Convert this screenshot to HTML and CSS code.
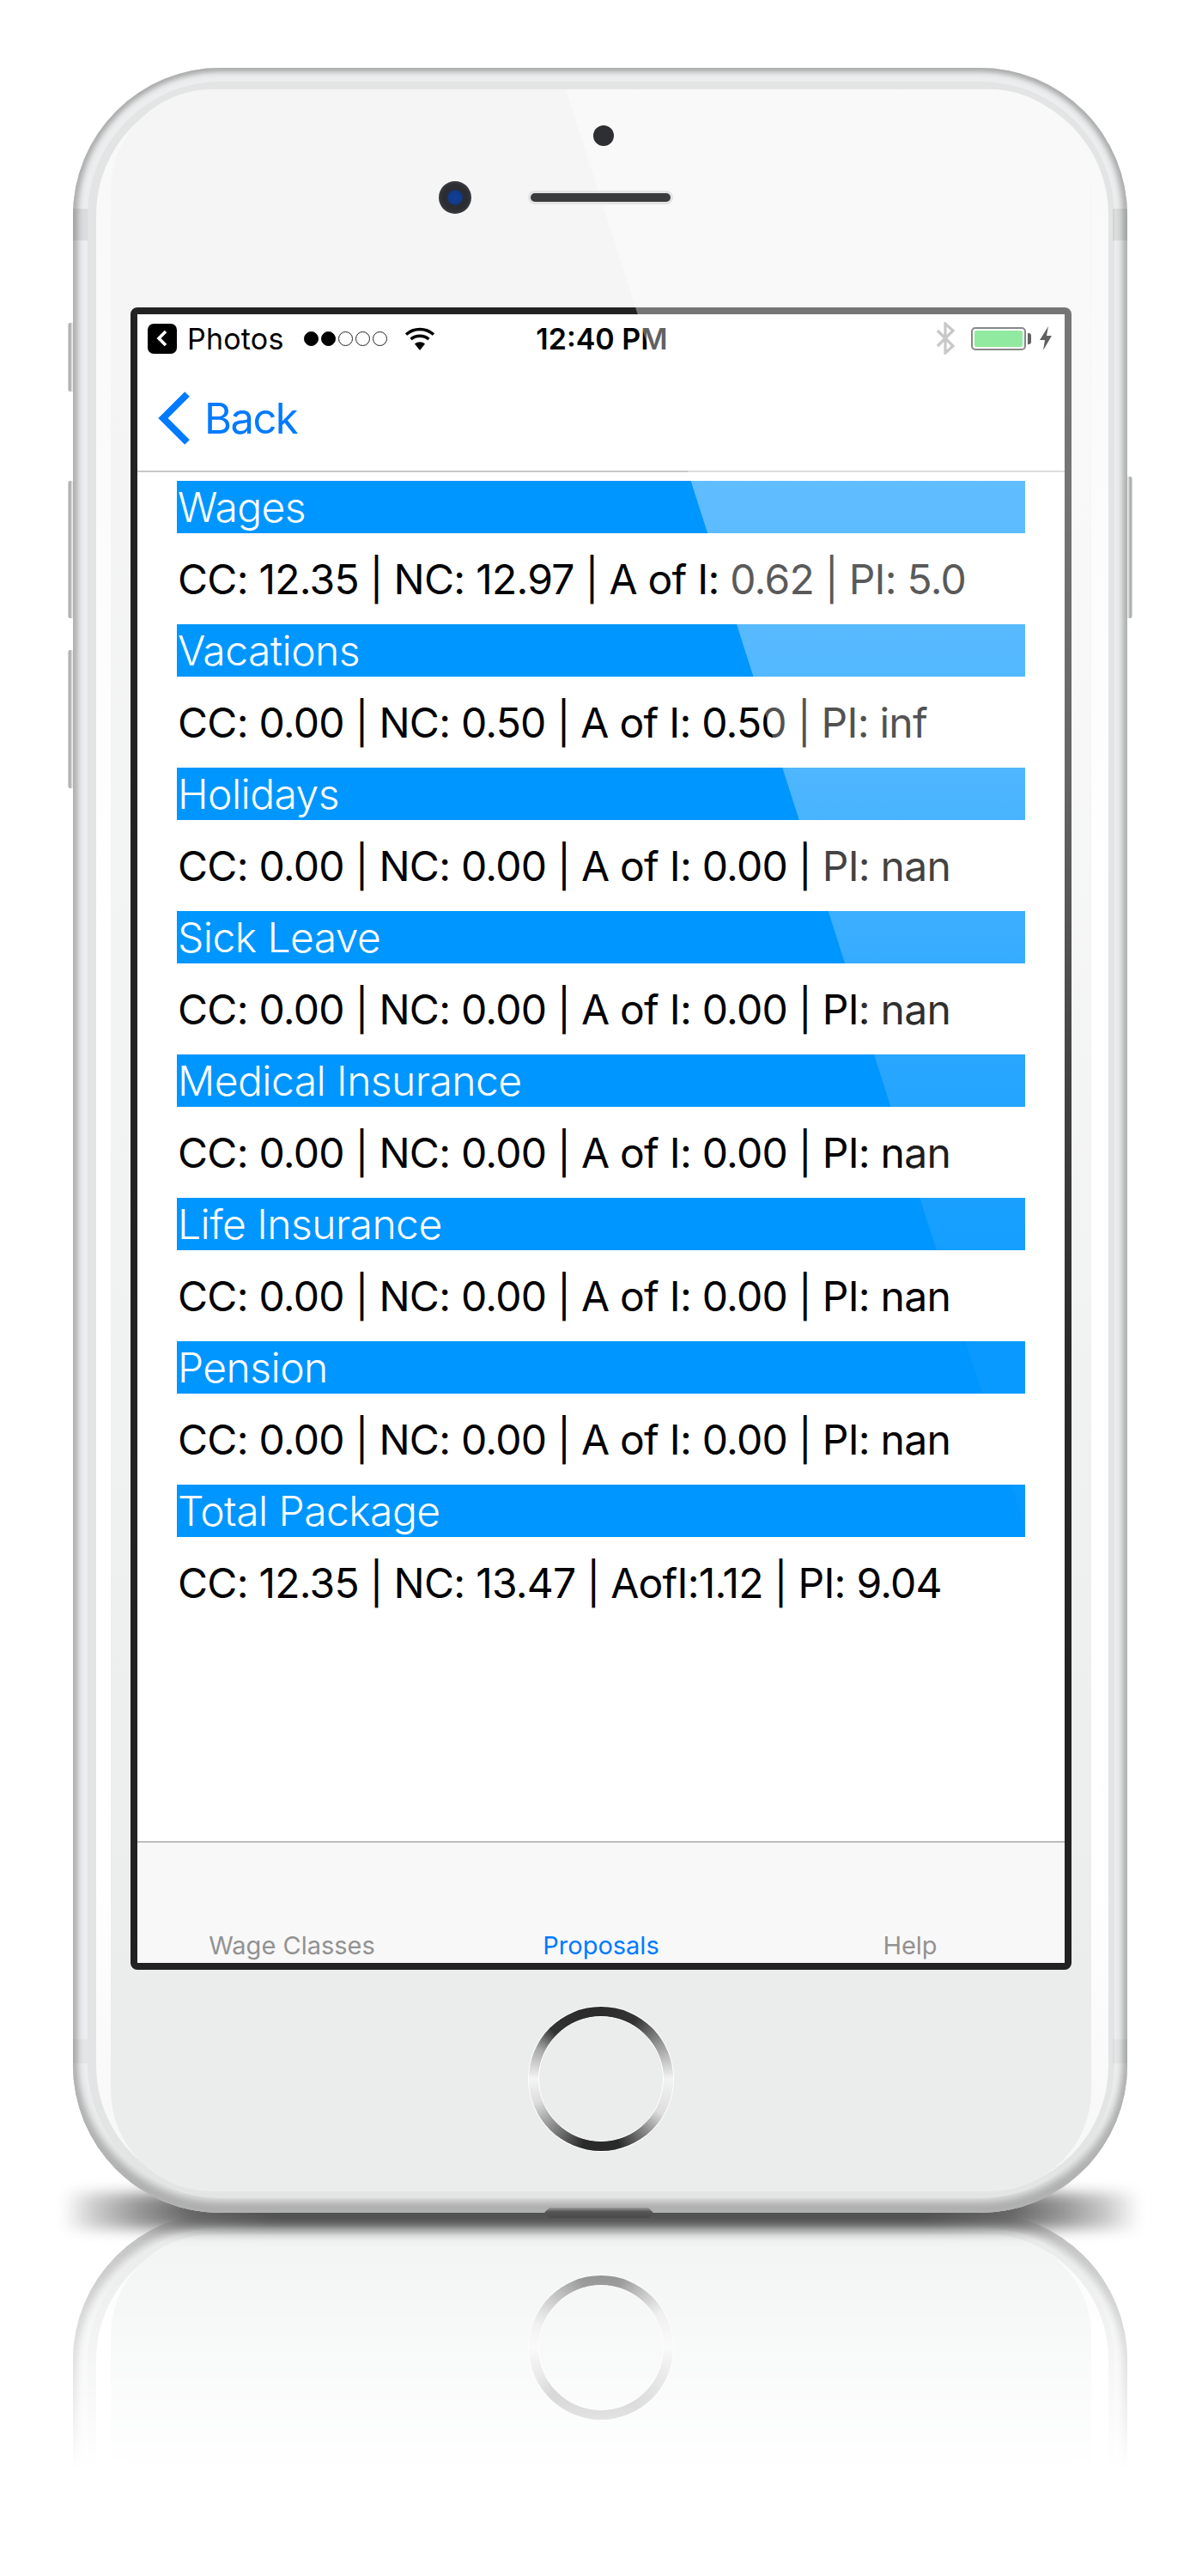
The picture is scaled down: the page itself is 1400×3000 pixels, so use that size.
FILE: index.html
```html
<!DOCTYPE html>
<html lang="en">
<head>
    <meta charset="UTF-8">
    <meta name="viewport" content="width=device-width, initial-scale=1.0">
    <title>Proposals</title>
    <link rel="stylesheet" href="styles.css">
</head>
<body>
<div class="stage">
    <div class="floorShadow"></div>
    <div class="sideBtn silent"></div>
    <div class="sideBtn volUp"></div>
    <div class="sideBtn volDown"></div>
    <div class="sideBtn power"></div>

    <div class="device">
        <i class="antenna topLeft"></i>
        <i class="antenna topRight"></i>
        <i class="antenna bottomLeft"></i>
        <i class="antenna bottomRight"></i>
        <div class="band">
            <div class="edge">
                <div class="face">
                    <div class="head">
                        <div class="sensor"></div>
                        <div class="headRow">
                            <div class="camera"><div class="lens"></div></div>
                            <div class="speaker"></div>
                        </div>
                    </div>

                    <div class="screen">
                        <div class="statusBar">
                            <div class="statusLeft">
                                <div class="appIcon">
                                    <svg width="14" height="20" viewBox="0 0 14 20"><polyline points="11,2 3,10 11,18" fill="none" stroke="#fff" stroke-width="3.6"/></svg>
                                </div>
                                <span class="appName">Photos</span>
                                <div class="signal">
                                    <i class="dot on"></i><i class="dot on"></i><i class="dot"></i><i class="dot"></i><i class="dot"></i>
                                </div>
                                <svg class="wifi" width="36" height="27" viewBox="0 0 36 27">
                                    <path d="M2 8.5 C11 0.5 25 0.5 34 8.5" fill="none" stroke="#000" stroke-width="3.4"/>
                                    <path d="M7.5 14 C13.5 9 22.5 9 28.5 14" fill="none" stroke="#000" stroke-width="3.4"/>
                                    <path d="M12 19.5 C15.5 16.5 20.5 16.5 24 19.5 L18 27 Z" fill="#000"/>
                                </svg>
                            </div>
                            <span class="clock">12:40 PM</span>
                            <div class="statusRight">
                                <svg class="bluetooth" width="24" height="38" viewBox="0 0 24 38">
                                    <path d="M3 10 L21 28 L12 36 L12 2 L21 10 L3 28" fill="none" stroke="#a6a6a6" stroke-width="3.2"/>
                                </svg>
                                <div class="battery"><div class="batteryFill"></div></div>
                                <div class="batteryNub"></div>
                                <svg class="bolt" width="16" height="28" viewBox="0 0 16 28">
                                    <path d="M11 0 L1 16 H7 L5 28 L15 11 H9 Z" fill="#000"/>
                                </svg>
                            </div>
                        </div>

                        <div class="navBar">
                            <svg width="38" height="62" viewBox="0 0 38 62"><polyline points="34,3 6,31 34,59" fill="none" stroke="#007aff" stroke-width="8"/></svg>
                            <span class="backText">Back</span>
                        </div>

                        <div class="content">
                            <div class="section"><div class="sectionTitle">Wages</div><div class="sectionRow">CC: 12.35 | NC: 12.97 | A of I: 0.62 | PI: 5.0</div></div>
                            <div class="section"><div class="sectionTitle">Vacations</div><div class="sectionRow">CC: 0.00 | NC: 0.50 | A of I: 0.50 | PI: inf</div></div>
                            <div class="section"><div class="sectionTitle">Holidays</div><div class="sectionRow">CC: 0.00 | NC: 0.00 | A of I: 0.00 | PI: nan</div></div>
                            <div class="section"><div class="sectionTitle">Sick Leave</div><div class="sectionRow">CC: 0.00 | NC: 0.00 | A of I: 0.00 | PI: nan</div></div>
                            <div class="section"><div class="sectionTitle">Medical Insurance</div><div class="sectionRow">CC: 0.00 | NC: 0.00 | A of I: 0.00 | PI: nan</div></div>
                            <div class="section"><div class="sectionTitle">Life Insurance</div><div class="sectionRow">CC: 0.00 | NC: 0.00 | A of I: 0.00 | PI: nan</div></div>
                            <div class="section"><div class="sectionTitle">Pension</div><div class="sectionRow">CC: 0.00 | NC: 0.00 | A of I: 0.00 | PI: nan</div></div>
                            <div class="section"><div class="sectionTitle">Total Package</div><div class="sectionRow">CC: 12.35 | NC: 13.47 | AofI:1.12 | PI: 9.04</div></div>
                        </div>

                        <div class="tabBar">
                            <span class="tab">Wage Classes</span>
                            <span class="tab active">Proposals</span>
                            <span class="tab">Help</span>
                        </div>
                    </div>

                    <div class="foot">
                        <div class="homeBtn"><div class="homeInner"></div></div>
                    </div>

                    <div class="glare"></div>
                </div>
            </div>
        </div>
        <div class="port"></div>
    </div>

    <!-- mirror of the lower part of the phone -->
    <div class="reflection">
        <div class="device mirrored">
            <div class="band">
                <div class="edge">
                    <div class="face">
                        <div class="mirrorScreen"></div>
                        <div class="mirrorFoot">
                            <div class="homeBtn"><div class="homeInner"></div></div>
                        </div>
                    </div>
                </div>
            </div>
        </div>
    </div>
</div>
</body>
</html>
```

FILE: styles.css
```css
body {
    margin: 0;
    background-color: #ffffff;
    font-family: 'Inter', 'Liberation Sans', sans-serif;
}

.stage {
    position: relative;
    width: 1400px;
    height: 3000px;
    padding: 79px 0 0 85px;
    box-sizing: border-box;
    overflow: hidden;
}

.floorShadow {
    position: absolute;
    left: 72px;
    top: 2554px;
    width: 1256px;
    height: 42px;
    background: linear-gradient(to right, transparent, #cccccc 3%, #999999 7%, #666666 12%, #505050 20%, #505050 80%, #666666 88%, #999999 93%, #cccccc 97%, transparent);
    filter: blur(8px);
    z-index: 2;
}

.sideBtn {
    position: absolute;
    width: 9px;
    border-radius: 3px 0 0 3px;
    background: linear-gradient(to right, #dcdcdc, #a5a6a6 25%, #ececec 60%, #d0d0d0);
}

.silent { left: 79px; top: 376px; height: 80px; }
.volUp { left: 79px; top: 560px; height: 160px; }
.volDown { left: 79px; top: 757px; height: 161px; }
.power {
    left: 1310px;
    top: 555px;
    height: 165px;
    border-radius: 0 3px 3px 0;
    background: linear-gradient(to left, #dcdcdc, #a5a6a6 25%, #ececec 60%, #d0d0d0);
}

/* phone body, outside to inside: rim, grey band, white edge, face */
.device {
    position: relative;
    width: 1228px;
    height: 2498px;
    box-sizing: border-box;
    padding: 16px 15px 17px 17px;
    border-radius: 172px;
    background: #ecedee;
    box-shadow: inset 0 4px 7px #a9aaaa, inset 5px 0 7px #b6b7b7, inset -5px 0 7px #b6b7b7, inset 0 -14px 12px #ababab;
    z-index: 3;
}

.antenna {
    position: absolute;
    width: 17px;
    background: rgba(0, 0, 0, 0.07);
}

.topLeft { left: 0; top: 164px; height: 37px; }
.topRight { right: 0; top: 164px; height: 37px; }
.bottomLeft { left: 0; top: 2296px; height: 28px; background: rgba(0, 0, 0, 0.03); }
.bottomRight { right: 0; top: 2296px; height: 28px; background: rgba(0, 0, 0, 0.03); }

.band {
    height: 100%;
    box-sizing: border-box;
    padding: 9px 7px 8px 10px;
    border-radius: 156px;
    background: #e3e4e4;
}

.edge {
    height: 100%;
    box-sizing: border-box;
    padding: 0 20px 0 17px;
    border-radius: 146px;
    background: linear-gradient(#f8f8f8, #ffffff 40%, #ffffff 85%, #f6f6f6);
}

.face {
    position: relative;
    height: 100%;
    border-radius: 118px;
    overflow: hidden;
    background: linear-gradient(#f5f5f5 10%, #f1f2f2 55%, #ebeded 90%);
}

.glare {
    position: absolute;
    inset: 0;
    pointer-events: none;
    clip-path: polygon(530px 0, 1141px 0, 1141px 1913px);
    background: linear-gradient(
        rgba(255, 255, 255, 0.385) 0,
        rgba(255, 255, 255, 0.376) 456px,
        rgba(255, 255, 255, 0.31) 789px,
        rgba(255, 255, 255, 0.24) 958px,
        rgba(255, 255, 255, 0.16) 1124px,
        rgba(255, 255, 255, 0.10) 1292px,
        rgba(255, 255, 255, 0.04) 1459px,
        rgba(255, 255, 255, 0) 1913px
    );
}

.head {
    position: relative;
    z-index: 1;
    height: 254px;
    box-sizing: border-box;
    padding-top: 42px;
}

.sensor {
    width: 24px;
    height: 24px;
    margin-left: 562px;
    border-radius: 50%;
    background: #2d2f33;
}

.headRow {
    display: flex;
    align-items: center;
    margin-top: 41px;
    padding-left: 382px;
    gap: 69px;
}

.camera {
    display: flex;
    align-items: center;
    justify-content: center;
    width: 38px;
    height: 38px;
    border-radius: 50%;
    background: radial-gradient(#2b2d33 55%, #55575a);
}

.lens {
    width: 18px;
    height: 18px;
    border-radius: 50%;
    background: radial-gradient(#0f3f9c, #123a85 60%, #0c1f48);
}

.speaker {
    width: 163px;
    height: 10px;
    border-radius: 5px;
    background: #3a3b3c;
    box-shadow: 0 0 0 3px #e3e3e3;
}

/* app screen */
.screen {
    display: flex;
    flex-direction: column;
    width: 1080px;
    height: 1920px;
    margin-left: 23px;
    border: 8px solid #222222;
    border-radius: 8px;
    background: #ffffff;
}

.statusBar {
    display: grid;
    grid-template-columns: 1fr auto 1fr;
    align-items: center;
    height: 56px;
    padding: 0 14px 4px 12px;
}

.statusLeft {
    display: flex;
    align-items: center;
}

.appIcon {
    display: flex;
    align-items: center;
    justify-content: center;
    width: 34px;
    height: 35px;
    border-radius: 7px;
    background: #000000;
}

.appName {
    margin-left: 12px;
    font-size: 34px;
    font-weight: 400;
    letter-spacing: 0.2px;
    color: #000000;
}

.signal {
    display: flex;
    gap: 3px;
    margin-left: 23px;
}

.dot {
    width: 17px;
    height: 17px;
    box-sizing: border-box;
    border: 1.5px solid #222222;
    border-radius: 50%;
}

.dot.on {
    background: #000000;
    border-color: #000000;
}

.wifi {
    margin-left: 20px;
}

.clock {
    margin-left: 4px;
    font-size: 34px;
    font-weight: 600;
    color: #000000;
}

.statusRight {
    display: flex;
    align-items: center;
    justify-content: flex-end;
}

.battery {
    width: 64px;
    height: 27px;
    box-sizing: border-box;
    margin-left: 18px;
    padding: 2px;
    border: 2px solid #3f3f3f;
    border-radius: 5px;
}

.batteryFill {
    height: 100%;
    border-radius: 2px;
    background: #4cdd64;
}

.batteryNub {
    width: 4px;
    height: 13px;
    margin-left: 2px;
    border-radius: 0 3px 3px 0;
    background: #000000;
}

.bolt {
    margin-left: 9px;
}

.navBar {
    display: flex;
    align-items: center;
    gap: 16px;
    height: 124px;
    box-sizing: border-box;
    padding-left: 24px;
    border-bottom: 2px solid #c8c8c8;
    flex-shrink: 0;
}

.backText {
    font-size: 49px;
    letter-spacing: -1.6px;
    color: #007aff;
}

.content {
    flex: 1;
    padding: 10px 46px 0;
}

.section {
    height: 167px;
}

.sectionTitle {
    height: 61px;
    padding-left: 1px;
    background: #0096ff;
    color: #ffffff;
    font-size: 48px;
    font-weight: 300;
    letter-spacing: -0.55px;
    line-height: 62px;
}

.sectionRow {
    padding-left: 1px;
    font-size: 48px;
    letter-spacing: -0.75px;
    line-height: 108px;
    color: #000000;
    white-space: nowrap;
}

.tabBar {
    display: flex;
    align-items: flex-end;
    height: 142px;
    box-sizing: border-box;
    padding-bottom: 3px;
    border-top: 2px solid #bdbdbd;
    background: #f8f8f8;
    flex-shrink: 0;
}

.tab {
    flex: 1;
    text-align: center;
    font-size: 29px;
    color: #929292;
}

.tab.active {
    color: #007aff;
}

.foot {
    display: flex;
    justify-content: center;
    padding-top: 43px;
}

.homeBtn {
    width: 168px;
    height: 168px;
    box-sizing: border-box;
    padding: 11px;
    border-radius: 50%;
    background: conic-gradient(#2c2c2c 0deg, #333333 30deg, #999999 60deg, #f3f3f3 90deg, #dddddd 120deg, #888888 140deg, #2a2a2a 165deg, #2a2a2a 195deg, #8a8a8a 225deg, #dddddd 250deg, #f5f5f5 270deg, #aaaaaa 295deg, #333333 315deg, #2c2c2c 345deg);
    box-shadow: 0 0 0 1px #ffffff;
}

.homeInner {
    height: 100%;
    box-sizing: border-box;
    border: 1px solid #ffffff;
    border-radius: 50%;
    background: #ebeded;
}

.port {
    position: absolute;
    left: 549px;
    top: 2492px;
    width: 127px;
    height: 12px;
    clip-path: polygon(6px 0, 121px 0, 127px 6px, 121px 12px, 6px 12px, 0 6px);
    background: linear-gradient(#9a9a9a, #555555 40%, #4a4a4a);
}

/* reflection under the phone */
.reflection {
    position: relative;
    width: 1228px;
    height: 300px;
    overflow: hidden;
    z-index: 1;
    -webkit-mask-image: linear-gradient(rgba(0, 0, 0, 0.85) 0, rgba(0, 0, 0, 0.5) 120px, rgba(0, 0, 0, 0.12) 260px, transparent 300px);
    mask-image: linear-gradient(rgba(0, 0, 0, 0.85) 0, rgba(0, 0, 0, 0.5) 120px, rgba(0, 0, 0, 0.12) 260px, transparent 300px);
}

.device.mirrored {
    height: 900px;
    transform: scaleY(-1);
    z-index: auto;
}

.mirrorScreen {
    width: 1096px;
    height: 400px;
    margin-left: 23px;
    margin-top: 191px;
    box-sizing: border-box;
    border: 8px solid #dddddd;
    border-radius: 8px;
    background: #ffffff;
}

.mirrorFoot {
    display: flex;
    justify-content: center;
    padding-top: 43px;
}

.mirrored .homeBtn {
    opacity: 0.75;
}

.mirrored .homeInner {
    background: #eef0f0;
}

.mirrored .face {
    background: #eef0f0;
}
```
